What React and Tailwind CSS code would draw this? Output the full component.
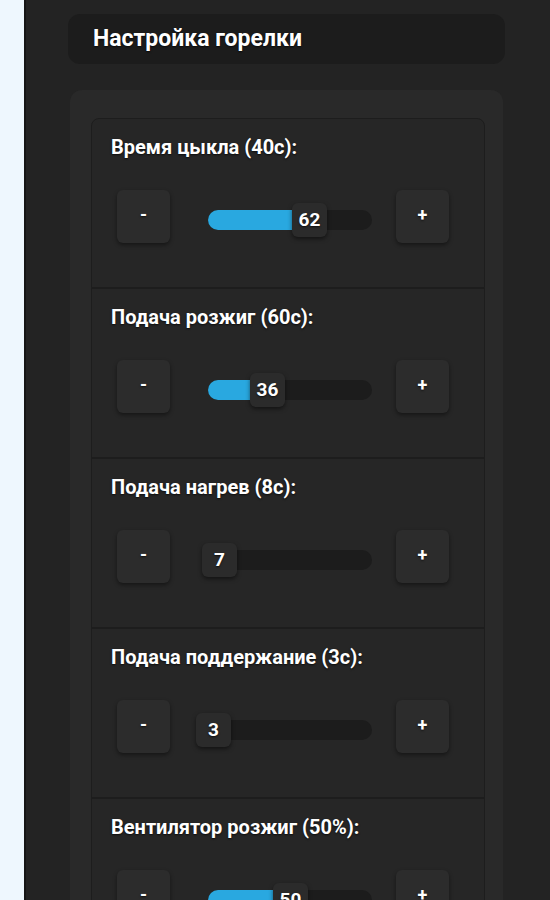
import React from 'react';

const settings = [
    { label: 'Время цыкла (40с):', value: 62 },
    { label: 'Подача розжиг (60с):', value: 36 },
    { label: 'Подача нагрев (8с):', value: 7 },
    { label: 'Подача поддержание (3с):', value: 3 },
    { label: 'Вентилятор розжиг (50%):', value: 50 },
];

const shadowText = '[text-shadow:0_1px_2px_rgba(0,0,0,0.7)]';

const StepButton = ({ children }) => (
    <button className={`w-[53px] h-[53px] rounded-[6px] bg-[#2c2c2c] shadow-[0_2px_4px_rgba(0,0,0,0.45)] text-white text-[18px] font-bold flex items-center justify-center pb-[4px] ${shadowText}`}>
        {children}
    </button>
);

const Slider = ({ value }) => {
    // thumb center moves 1.63px per unit across the 164px track
    const center = Math.round(value * 1.63);
    return (
        <div className="relative w-[164px] h-[20px] rounded-full bg-[#1c1c1c]">
            <div className="absolute left-0 top-0 h-full rounded-full bg-[#29a8e0]" style={{ width: center }} />
            <div
                className={`absolute top-[-7px] w-[35px] h-[34px] rounded-[6px] bg-[#2b2b2b] shadow-[0_2px_4px_rgba(0,0,0,0.5)] flex items-center justify-center text-white text-[19px] font-bold ${shadowText}`}
                style={{ left: center - 17 }}
            >
                {value}
            </div>
        </div>
    );
};

const SettingCard = ({ label, value, first }) => (
    <div className={`h-[170px] border border-[#1d1d1d] bg-[#262626] pl-[19px] pt-[16px] ${first ? 'rounded-t-[8px]' : ''}`}>
        <div className={`text-white text-[20px] font-bold leading-[24px] ${shadowText}`}>{label}</div>
        <div className="flex items-start mt-[31px] pl-[6px]">
            <StepButton>-</StepButton>
            <div className="ml-[38px] mr-[24px] mt-[20px]">
                <Slider value={value} />
            </div>
            <StepButton>+</StepButton>
        </div>
    </div>
);

export default function App() {
    return (
        <div className="flex min-h-[900px] h-[900px] overflow-hidden bg-[#eef7fe] font-['Roboto','Liberation_Sans',sans-serif]">
            <div className="w-[24px] shrink-0" />
            <div className="flex-1 bg-[#232323] border-l-2 border-[#161616] pl-[42px] pr-[45px] pt-[14px]">
                <div className={`h-[50px] rounded-[12px] bg-[#1c1c1c] px-[25px] flex items-center text-white text-[23px] font-bold ${shadowText}`}>
                    Настройка горелки
                </div>
                <div className="mt-[26px] mx-[2px] rounded-[12px] bg-[#292929] pl-[21px] pr-[18px] pt-[28px]">
                    {settings.map((s, i) => (
                        <SettingCard key={s.label} label={s.label} value={s.value} first={i === 0} />
                    ))}
                </div>
            </div>
        </div>
    );
}
